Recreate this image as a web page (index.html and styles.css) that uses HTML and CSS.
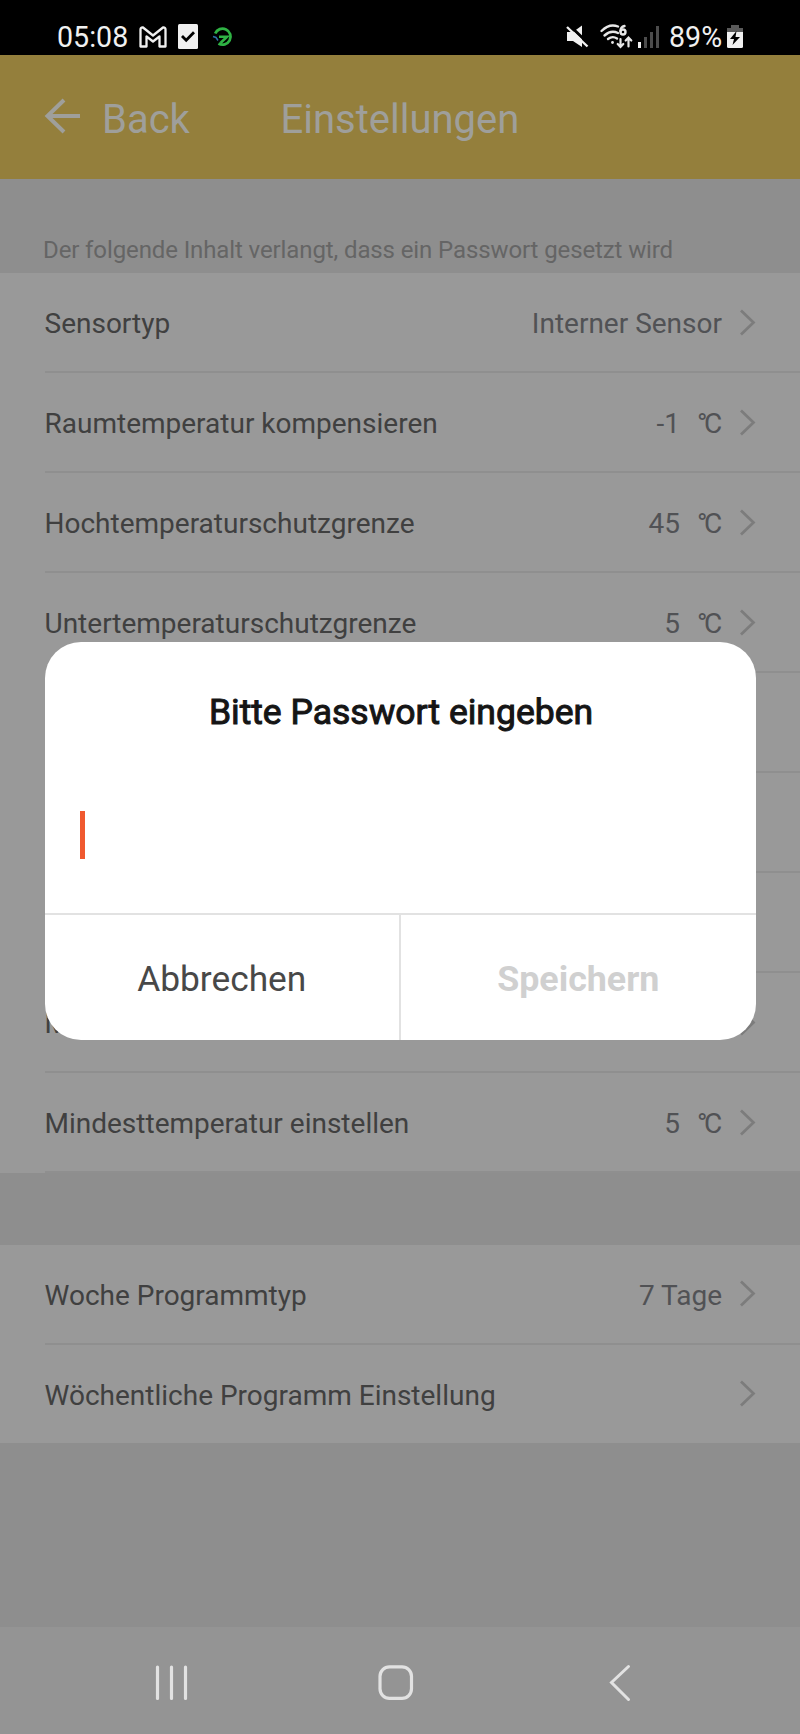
FILE: index.html
```html
<!DOCTYPE html>
<html lang="de">
<head>
<meta charset="utf-8">
<title>Einstellungen</title>
<link rel="stylesheet" href="styles.css">
</head>
<body>
<div class="screen">
  <div class="status">
    <span class="clock">05:08</span>
    <svg class="ico-mail" width="28" height="22" viewBox="0 0 28 22" fill="none" stroke="#f0f0f0" stroke-width="2.300" stroke-linejoin="round"><path d="M1.500 20.500V3.500Q1.500 1.200 4 1.500L14 9.500 24 1.500Q26.500 1.200 26.500 3.500V20.500H20.500V10.500L14 15.500 7.500 10.500V20.500Z"/></svg>
    <svg class="ico-check" width="20" height="25" viewBox="0 0 20 25"><rect width="20" height="25" rx="1.500" fill="#f0f0f0"/><path d="M4 12l4.200 4.200 7.800-8" fill="none" stroke="#000" stroke-width="2.800"/></svg>
    <svg class="ico-app" width="20" height="21" viewBox="0 0 20 21" fill="none"><path d="M2.200 7.500A8 8 0 1 1 5.500 17.500" stroke="#2fb344" stroke-width="2.800"/><path d="M6 10.800H14L7.500 17" stroke="#2fb344" stroke-width="2.600"/><path d="M0 10.500l3 1 2 3" stroke="#2c6fa8" stroke-width="1.500"/></svg>
    <span class="spacer"></span>
    <svg class="ico-mute" width="23" height="23" viewBox="0 0 23 23"><path d="M1 7h6l9-6.500V22L7 16H1Z" fill="#f0f0f0"/><path d="M1.500-1.500L24 20" stroke="#000" stroke-width="3"/><path d="M1 2L21.500 21.500" stroke="#f0f0f0" stroke-width="2.400"/></svg>
    <svg class="ico-wifi" width="33" height="25" viewBox="0 0 33 25" fill="none" stroke="#e8e8e8" stroke-width="2.400" stroke-linecap="round"><path d="M1.500 7Q9.500-1 18 2.500M4.500 11.500Q11 5.500 18 9M8 15Q12.500 11.500 17 14.500"/><circle cx="12.500" cy="18.500" r="1.400" fill="#e8e8e8" stroke="none"/><path d="M24.500 2Q20.500 3 20.500 7"/><circle cx="23" cy="8" r="2.500"/><path d="M20.500 15v7M17.700 20l2.800 3 2.800-3M28.500 22.500V14.500M25.700 16.500l2.800-3 2.800 3" stroke-width="2.200"/></svg>
    <svg class="ico-signal" width="21" height="23" viewBox="0 0 21 23"><rect x="0" y="17" width="3" height="6" fill="#f0f0f0"/><path d="M6 12h3v11H6zM12 7h3v16h-3zM18 1h3v22h-3z" fill="#4c4c4c"/></svg>
    <span class="battery-text">89%</span>
    <svg class="ico-battery" width="16" height="23" viewBox="0 0 16 23"><path d="M4 0h8v3h4v5H0V3h4z" fill="#5a5a5a"/><path d="M0 7h16v14.500q0 1.500-1.500 1.500h-13Q0 23 0 21.500z" fill="#f0f0f0"/><path d="M9.500 6L3 14h4l-1.500 6L13 12H8.500z" fill="#000"/></svg>
  </div>
  <div class="header">
    <svg width="36" height="36" viewBox="0 0 36 36" fill="none" stroke="#9f9f9b" stroke-width="4"><path d="M36 18H3M20 2L3.500 18 20 34"/></svg>
    <span class="back">Back</span>
    <span class="title">Einstellungen</span>
  </div>
  <div class="caption"><span>Der folgende Inhalt verlangt, dass ein Passwort gesetzt wird</span></div>
  <div class="group">
    <div class="row"><span class="label">Sensortyp</span><span class="value">Interner Sensor</span><svg class="chev" viewBox="0 0 15 27"><path d="M1 1.500L13.500 13.500 1 25.500"/></svg></div>
    <div class="row"><span class="label">Raumtemperatur kompensieren</span><span class="value">-1</span><span class="unit">°C</span><svg class="chev" viewBox="0 0 15 27"><path d="M1 1.500L13.500 13.500 1 25.500"/></svg></div>
    <div class="row"><span class="label">Hochtemperaturschutzgrenze</span><span class="value">45</span><span class="unit">°C</span><svg class="chev" viewBox="0 0 15 27"><path d="M1 1.500L13.500 13.500 1 25.500"/></svg></div>
    <div class="row"><span class="label">Untertemperaturschutzgrenze</span><span class="value">5</span><span class="unit">°C</span><svg class="chev" viewBox="0 0 15 27"><path d="M1 1.500L13.500 13.500 1 25.500"/></svg></div>
    <div class="row"></div>
    <div class="row"></div>
    <div class="row"></div>
    <div class="row"><span class="label">M</span><svg class="chev" viewBox="0 0 15 27"><path d="M1 1.500L13.500 13.500 1 25.500"/></svg></div>
    <div class="row"><span class="label">Mindesttemperatur einstellen</span><span class="value">5</span><span class="unit">°C</span><svg class="chev" viewBox="0 0 15 27"><path d="M1 1.500L13.500 13.500 1 25.500"/></svg></div>
  </div>
  <div class="group second">
    <div class="row"><span class="label">Woche Programmtyp</span><span class="value">7 Tage</span><svg class="chev" viewBox="0 0 15 27"><path d="M1 1.500L13.500 13.500 1 25.500"/></svg></div>
    <div class="row"><span class="label">Wöchentliche Programm Einstellung</span><svg class="chev" viewBox="0 0 15 27"><path d="M1 1.500L13.500 13.500 1 25.500"/></svg></div>
  </div>
  <div class="nav">
    <svg width="34" height="36" viewBox="0 0 34 36" stroke="#e2e2e2" stroke-width="3.200" stroke-linecap="round"><path d="M2.500 2v31.500M16.500 2v31.500M30.500 2v31.500"/></svg>
    <svg class="home" width="36" height="36" viewBox="0 0 36 36" fill="none" stroke="#e2e2e2" stroke-width="3.200"><rect x="2" y="1.800" width="31.500" height="31.500" rx="9.500"/></svg>
    <svg width="22" height="36" viewBox="0 0 22 36" fill="none" stroke="#e2e2e2" stroke-width="3" stroke-linecap="round"><path d="M19.500 1.500L2.500 17.500l17 17"/></svg>
  </div>
  <div class="dialog">
    <div class="dialog-title"><span>Bitte Passwort eingeben</span></div>
    <div class="field"><span class="caret"></span></div>
    <div class="actions">
      <div class="action cancel"><span>Abbrechen</span></div>
      <div class="action save"><span>Speichern</span></div>
    </div>
  </div>
</div>
</body>
</html>
```
FILE: styles.css
```css
* { box-sizing: border-box; }
body { margin: 0; font-family: Roboto, "Liberation Sans", sans-serif; }
svg { display: block; flex: none; overflow: visible; }
span { white-space: nowrap; }
.screen { position: relative; display: flex; flex-direction: column; width: 800px; height: 1734px; overflow: hidden; background: #8e8e8e; }

.status { display: flex; flex: none; align-items: center; height: 55px; padding: 18px 57px 0 57px; background: #000; color: #f0f0f0; font-size: 28.6px; line-height: 36px; }
.clock { width: 72px; }
.ico-mail { margin-left: 10px; }
.ico-check { margin-left: 11px; }
.ico-app { margin-left: 15px; }
.spacer { flex: 1; }
.ico-wifi { margin-left: 11px; }
.ico-signal { margin-left: 5px; }
.battery-text { width: 53px; margin-left: 10px; }
.ico-battery { margin-left: 5px; }

.header { display: flex; flex: none; align-items: center; height: 124px; padding: 6px 44px 0; background: #947f3c; color: #9f9f9b; font-size: 40px; line-height: 48px; }
.header svg { margin-top: -8px; }
.back { width: 178.5px; margin-left: 22px; }

.caption { display: flex; flex: none; align-items: flex-end; height: 94px; padding: 0 43px 8px; color: #656565; font-size: 24px; line-height: 30px; letter-spacing: -0.11px; }

.group { flex: none; background: #999; padding-left: 44.5px; }
.second { margin-top: 72px; }
.row { display: flex; align-items: center; height: 100px; padding: 4px 45px 0 0; border-bottom: 2px solid #8f8f8f; color: #404040; font-size: 28px; line-height: 36px; }
.second .row { padding-top: 3px; }
.second .row:last-child { height: 98px; border-bottom: 0; }
.label { flex: 1; }
.value { color: #515255; }
.unit { width: 25px; margin-left: 17px; color: #515255; letter-spacing: -3.5px; }
.chev { width: 15px; height: 27px; margin: -4px 0 0 18px; fill: none; stroke: #7c7c7c; stroke-width: 2.7; }

.nav { display: flex; flex: none; align-items: center; justify-content: space-between; height: 107px; margin-top: auto; padding: 4px 169px 0 155px; background: #949494; }
.home { margin-right: 6px; }

.dialog { position: absolute; left: 44.5px; top: 642px; display: flex; flex-direction: column; width: 711px; height: 398px; border-radius: 36px; overflow: hidden; background: #fff; }
.dialog-title { display: flex; justify-content: center; height: 140px; padding: 48px 0 0 2px; color: #151515; font-size: 35.5px; -webkit-text-stroke: 1px #151515; line-height: 44px; }
.field { flex: 1; padding: 29px 35.5px 0; }
.caret { display: block; width: 5px; height: 48px; background: #f0592f; }
.actions { display: flex; height: 127px; border-top: 2px solid #e2e2e2; font-size: 35.8px; line-height: 44px; }
.action { display: flex; flex: 1; align-items: center; justify-content: center; padding-top: 3px; }
.cancel { color: #484848; border-right: 2px solid #e2e2e2; font-size: 35.3px; }
.save { color: #d0d0d0; font-weight: 700; }
```
